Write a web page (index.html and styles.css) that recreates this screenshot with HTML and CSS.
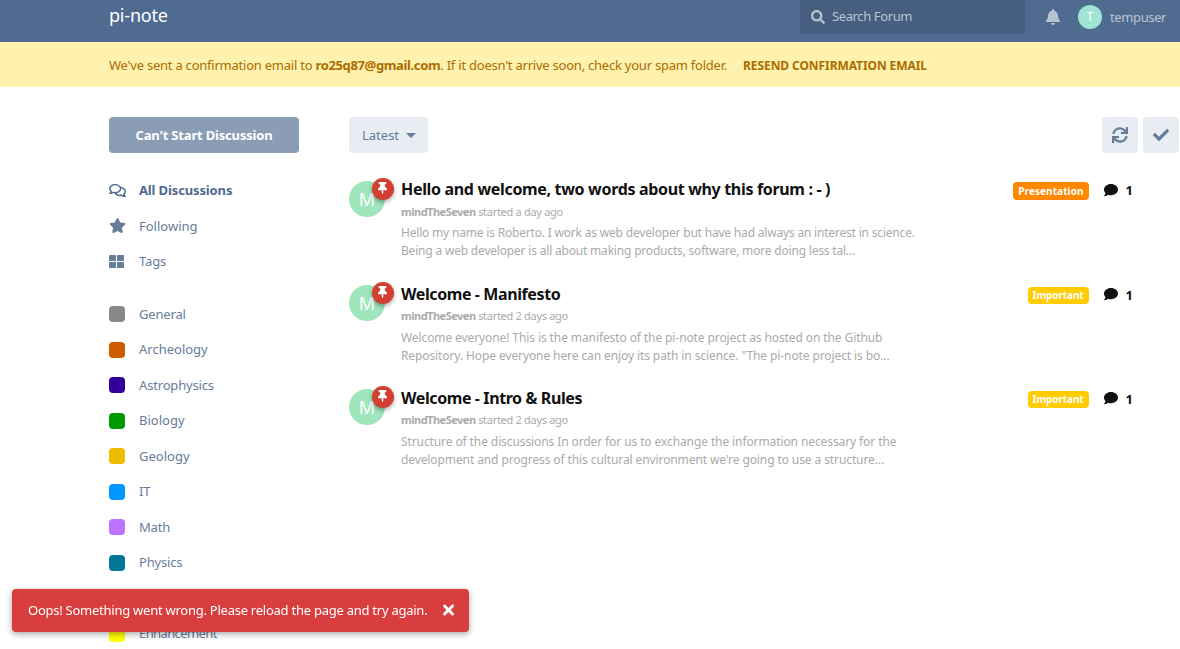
FILE: index.html
```html
<!DOCTYPE html>
<html lang="en">
<head>
<meta charset="UTF-8">
<meta name="viewport" content="width=device-width, initial-scale=1">
<title>pi-note</title>
<link rel="stylesheet" href="styles.css">
</head>
<body>
<!-- icons -->
<svg class="sprite" width="0" height="0">
	<symbol id="search" viewBox="0 0 512 512"><path d="M505 442.7L405.3 343c-4.5-4.5-10.6-7-17-7H372c27.6-35.3 44-79.7 44-128C416 93.1 322.9 0 208 0S0 93.1 0 208s93.1 208 208 208c48.3 0 92.7-16.4 128-44v16.3c0 6.4 2.5 12.5 7 17l99.7 99.7c9.4 9.4 24.6 9.4 33.9 0l28.3-28.3c9.4-9.4 9.4-24.6.1-34zM208 336c-70.7 0-128-57.2-128-128 0-70.7 57.2-128 128-128 70.7 0 128 57.2 128 128 0 70.7-57.2 128-128 128z"/></symbol>
	<symbol id="bell" viewBox="0 0 448 512"><path d="M224 512c35.32 0 63.97-28.65 63.97-64H160.03c0 35.35 28.65 64 63.97 64zm215.39-149.71c-19.32-20.76-55.47-51.99-55.47-154.29 0-77.7-54.48-139.9-127.94-155.16V32c0-17.67-14.32-32-31.98-32s-31.98 14.33-31.98 32v20.84C118.56 68.1 64.08 130.3 64.08 208c0 102.3-36.15 133.53-55.47 154.29-6 6.45-8.66 14.16-8.61 21.71.11 16.4 12.98 32 32.1 32h383.8c19.12 0 32-15.6 32.1-32 .05-7.55-2.61-15.27-8.61-21.71z"/></symbol>
	<symbol id="sync" viewBox="0 0 512 512"><path d="M440.65 12.57l4 82.77A247.16 247.16 0 0 0 255.83 8C134.73 8 33.91 94.92 12.29 209.82A12 12 0 0 0 24.09 224h49.05a12 12 0 0 0 11.67-9.26 175.91 175.91 0 0 1 317-56.94l-101.46-4.86a12 12 0 0 0-12.57 12v47.41a12 12 0 0 0 12 12H500a12 12 0 0 0 12-12V12a12 12 0 0 0-12-12h-47.37a12 12 0 0 0-11.98 12.57zM255.83 432a175.61 175.61 0 0 1-146-77.8l101.8 4.87a12 12 0 0 0 12.57-12v-47.4a12 12 0 0 0-12-12H12a12 12 0 0 0-12 12V500a12 12 0 0 0 12 12h47.35a12 12 0 0 0 12-12.6l-4.15-82.57A247.17 247.17 0 0 0 255.83 504c121.11 0 221.93-86.92 243.55-201.82a12 12 0 0 0-11.8-14.18h-49.05a12 12 0 0 0-11.67 9.26A175.86 175.86 0 0 1 255.83 432z"/></symbol>
	<symbol id="check" viewBox="0 0 512 512"><path d="M173.898 439.404l-166.4-166.4c-9.997-9.997-9.997-26.206 0-36.204l36.203-36.204c9.997-9.998 26.207-9.998 36.204 0L192 312.69 432.095 72.596c9.997-9.997 26.207-9.997 36.204 0l36.203 36.204c9.997 9.997 9.997 26.206 0 36.204l-294.4 294.401c-9.998 9.997-26.207 9.997-36.204-.001z"/></symbol>
	<symbol id="comments" viewBox="0 0 576 512"><path d="M532 386.2c27.5-27.1 44-61.1 44-98.2 0-80-76.5-146.1-176.2-157.9C368.3 72.5 294.3 32 208 32 93.1 32 0 103.6 0 192c0 37 16.5 71 44 98.2-15.3 30.7-37.3 54.5-37.7 54.9-6.3 6.7-8.1 16.5-4.4 25 3.6 8.5 12 14 21.2 14 53.5 0 96.7-20.2 125.2-38.8 9.2 2.1 18.7 3.7 28.4 4.9C208.1 407.6 281.8 448 368 448c20.8 0 40.8-2.4 59.8-6.8C456.3 459.7 499.4 480 553 480c9.2 0 17.5-5.5 21.2-14 3.6-8.5 1.9-18.3-4.4-25-.4-.3-22.5-24.1-37.8-54.8zm-392.8-92.3L122.1 305c-14.1 9.1-28.5 16.3-43.1 21.4 2.7-4.7 5.4-9.7 8-14.8l15.5-31.1L77.7 256C64.2 242.6 48 220.7 48 192c0-60.7 73.3-112 160-112s160 51.3 160 112-73.3 112-160 112c-16.5 0-33-1.9-49-5.6l-19.8-4.5zM498.3 352l-24.7 24.4 15.5 31.1c2.6 5.1 5.3 10.1 8 14.8-14.6-5.1-29-12.3-43.1-21.4l-17.1-11.1-19.9 4.6c-16 3.7-32.5 5.6-49 5.6-54 0-102.2-20.1-131.3-49.7C338 339.5 416 272.9 416 192c0-3.4-.4-6.7-.7-10C479.7 196.5 528 238.8 528 288c0 28.7-16.2 50.6-29.7 64z"/></symbol>
	<symbol id="star" viewBox="0 0 576 512"><path d="M259.3 17.8L194 150.2 47.9 171.5c-26.2 3.8-36.7 36.1-17.7 54.6l105.7 103-25 145.5c-4.5 26.3 23.2 46 46.4 33.7L288 439.6l130.7 68.7c23.2 12.2 50.9-7.4 46.4-33.7l-25-145.5 105.7-103c19-18.5 8.5-50.8-17.7-54.6L382 150.2 316.7 17.8c-11.7-23.6-45.6-23.9-57.4 0z"/></symbol>
	<symbol id="tags" viewBox="0 0 512 512"><path d="M296 32h192c13.255 0 24 10.745 24 24v160c0 13.255-10.745 24-24 24H296c-13.255 0-24-10.745-24-24V56c0-13.255 10.745-24 24-24zm-80 0H24C10.745 32 0 42.745 0 56v160c0 13.255 10.745 24 24 24h192c13.255 0 24-10.745 24-24V56c0-13.255-10.745-24-24-24zM0 296v160c0 13.255 10.745 24 24 24h192c13.255 0 24-10.745 24-24V296c0-13.255-10.745-24-24-24H24c-13.255 0-24 10.745-24 24zm296 184h192c13.255 0 24-10.745 24-24V296c0-13.255-10.745-24-24-24H296c-13.255 0-24 10.745-24 24v160c0 13.255 10.745 24 24 24z"/></symbol>
	<symbol id="pin" viewBox="0 0 384 512"><path d="M298.028 214.267L285.793 96H328c13.255 0 24-10.745 24-24V24c0-13.255-10.745-24-24-24H56C42.745 0 32 10.745 32 24v48c0 13.255 10.745 24 24 24h42.207L85.972 214.267C37.465 236.82 0 277.261 0 328c0 13.255 10.745 24 24 24h136v104.007c0 1.242.289 2.467.845 3.578l24 48c2.941 5.882 11.364 5.893 14.311 0l24-48a8.008 8.008 0 0 0 .845-3.578V352h136c13.255 0 24-10.745 24-24-.001-51.183-37.983-91.42-85.973-113.733z"/></symbol>
	<symbol id="comment" viewBox="0 0 512 512"><path d="M256 32C114.6 32 0 125.1 0 240c0 49.6 21.4 95 57 130.7C44.5 421.1 2.7 466 2.2 466.5c-2.2 2.3-2.8 5.7-1.5 8.7S4.8 480 8 480c66.3 0 116-31.8 140.6-51.4 32.7 12.3 69 19.4 107.4 19.4 141.4 0 256-93.1 256-208S397.4 32 256 32z"/></symbol>
	<symbol id="times" viewBox="0 0 352 512"><path d="M242.72 256l100.07-100.07c12.28-12.28 12.28-32.19 0-44.48l-22.24-22.24c-12.28-12.28-32.19-12.28-44.48 0L176 189.28 75.93 89.21c-12.28-12.28-32.19-12.28-44.48 0L9.21 111.45c-12.28 12.28-12.28 32.19 0 44.48L109.28 256 9.21 356.07c-12.28 12.28-12.28 32.19 0 44.48l22.24 22.24c12.28 12.28 32.2 12.28 44.48 0L176 322.72l100.07 100.07c12.28 12.28 32.2 12.28 44.48 0l22.24-22.24c12.28-12.28 12.28-32.19 0-44.48L242.72 256z"/></symbol>
</svg>

<header class="header">
	<a class="logo">pi-note</a>
	<div class="search"><svg class="icon"><use href="#search"/></svg><span>Search Forum</span></div>
	<svg class="bell"><use href="#bell"/></svg>
	<div class="user"><span class="user-avatar">T</span><span>tempuser</span></div>
</header>

<div class="notice">
	<span class="notice-text">We've sent a confirmation email to <strong>ro25q87@gmail.com</strong>. If it doesn't arrive soon, check your spam folder.</span>
	<a class="resend">RESEND CONFIRMATION EMAIL</a>
</div>

<div class="container">
	<nav class="side">
		<div class="start">Can't Start Discussion</div>
		<ul class="links">
			<li class="active"><svg class="icon wide"><use href="#comments"/></svg><span>All Discussions</span></li>
			<li><svg class="icon wide"><use href="#star"/></svg><span class="spaced">Following</span></li>
			<li><svg class="icon"><use href="#tags"/></svg><span>Tags</span></li>
		</ul>
		<ul class="links tags">
			<li><i class="tag general"></i><span>General</span></li>
			<li><i class="tag archeology"></i><span class="spaced">Archeology</span></li>
			<li><i class="tag astro"></i><span>Astrophysics</span></li>
			<li><i class="tag biology"></i><span class="spaced">Biology</span></li>
			<li><i class="tag geology"></i><span class="spaced">Geology</span></li>
			<li><i class="tag it"></i><span>IT</span></li>
			<li><i class="tag math"></i><span>Math</span></li>
			<li><i class="tag physics"></i><span>Physics</span></li>
			<li></li>
			<li><i class="tag enhancement"></i><span class="tight">Enhancement</span></li>
		</ul>
	</nav>

	<main class="main">
		<div class="toolbar">
			<div class="sort"><span>Latest</span><i class="caret"></i></div>
			<div class="actions">
				<div class="square"><svg class="icon"><use href="#sync"/></svg></div>
				<div class="square"><svg class="icon"><use href="#check"/></svg></div>
			</div>
		</div>

		<article class="item long">
			<div class="avatar">M<span class="badge"><svg><use href="#pin"/></svg></span></div>
			<div class="text">
				<h3>Hello and welcome, two words about why this forum : - )</h3>
				<div class="meta"><b>mindTheSeven</b> started a day ago</div>
				<p>Hello my name is Roberto. I work as web developer but have had always an interest in science.<br>Being a web developer is all about making products, software, more doing less tal...</p>
			</div>
			<span class="label presentation">Presentation</span>
			<div class="count"><svg><use href="#comment"/></svg>1</div>
		</article>

		<article class="item">
			<div class="avatar">M<span class="badge"><svg><use href="#pin"/></svg></span></div>
			<div class="text">
				<h3>Welcome - Manifesto</h3>
				<div class="meta"><b>mindTheSeven</b> started 2 days ago</div>
				<p>Welcome everyone! This is the manifesto of the pi-note project as hosted on the Github<br>Repository. Hope everyone here can enjoy its path in science. "The pi-note project is bo...</p>
			</div>
			<span class="label important">Important</span>
			<div class="count"><svg><use href="#comment"/></svg>1</div>
		</article>

		<article class="item">
			<div class="avatar">M<span class="badge"><svg><use href="#pin"/></svg></span></div>
			<div class="text">
				<h3>Welcome - Intro &amp; Rules</h3>
				<div class="meta"><b>mindTheSeven</b> started 2 days ago</div>
				<p>Structure of the discussions In order for us to exchange the information necessary for the<br>development and progress of this cultural environment we're going to use a structure...</p>
			</div>
			<span class="label important">Important</span>
			<div class="count"><svg><use href="#comment"/></svg>1</div>
		</article>
	</main>
</div>

<div class="alert"><span>Oops! Something went wrong. Please reload the page and try again.</span><svg><use href="#times"/></svg></div>
</body>
</html>
```
FILE: styles.css
```css
* {
	box-sizing: border-box;
}
body {
	margin: 0;
	height: 649px;
	overflow: hidden;
	background: #fff;
	color: #667d99;
	font-family: "Noto Sans", "Open Sans", sans-serif;
	font-size: 13px;
	line-height: 18px;
	white-space: nowrap;
}
svg {
	display: block;
	fill: currentColor;
	flex: none;
}
.sprite {
	position: absolute;
}
.icon {
	width: 15px;
	height: 15px;
}

/* header */
.header {
	display: flex;
	height: 42px;
	padding-left: 109px;
	background: #4f6b90;
	color: #b9c4d3;
	letter-spacing: -0.38px;
}
.logo {
	width: 691px;
	padding-top: 3px;
	color: #fff;
	font-size: 18px;
	line-height: 24px;
	letter-spacing: -0.2px;
}
.search {
	display: flex;
	align-items: center;
	gap: 7px;
	width: 225px;
	height: 34px;
	padding: 0 0 2px 11px;
	border-radius: 0 0 4px 4px;
	background: #465f80;
}
.search .icon {
	width: 14px;
	height: 14px;
	margin-top: 1px;
}
.bell {
	width: 14px;
	height: 16px;
	margin: 9px 18px 0 21px;
}
.user {
	display: flex;
	align-items: center;
	gap: 8px;
	height: 34px;
}
.user-avatar {
	width: 24px;
	height: 24px;
	border-radius: 50%;
	background: #a0e5d3;
	color: #fff;
	font-size: 12px;
	line-height: 24px;
	text-align: center;
}

/* email notice */
.notice {
	display: flex;
	gap: 16px;
	height: 45px;
	padding: 14px 0 0 109px;
	background: #fff2ae;
	color: #ad6c00;
	letter-spacing: -0.23px;
}
.notice strong {
	letter-spacing: -0.36px;
}
.resend {
	padding-top: 1px;
	font-size: 12px;
	font-weight: bold;
	letter-spacing: -0.08px;
}

.container {
	display: flex;
	gap: 50px;
	padding: 30px 1px 0 109px;
}

/* sidebar */
.side {
	width: 190px;
}
.start {
	height: 36px;
	border-radius: 4px;
	background: #8b9cb5;
	color: #fff;
	font-weight: bold;
	line-height: 36px;
	letter-spacing: -0.18px;
	text-align: center;
}
.links {
	margin: 19.5px 0 0;
	padding: 0;
	list-style: none;
	letter-spacing: -0.17px;
}
.links li {
	display: flex;
	align-items: center;
	height: 35.5px;
}
.links span {
	margin-left: 14px;
}
.links .spaced {
	letter-spacing: 0;
}
.links .tight {
	letter-spacing: -0.6px;
}
.links .icon {
	width: 15px;
	margin-right: 1px;
}
.links .icon.wide {
	width: 17px;
	margin-right: 0;
}
.links .wide + span {
	margin-left: 13px;
}
.links .active {
	color: #4d698e;
	font-weight: bold;
	letter-spacing: -0.13px;
}
.links.tags {
	margin-top: 17px;
}
.tag {
	width: 16px;
	height: 16px;
	margin-top: 0.8px;
	border-radius: 4px;
}
.general { background: #888; }
.archeology { background: #cf5c00; }
.astro { background: #330099; }
.biology { background: #009900; }
.geology { background: #efbb00; }
.it { background: #0099ff; }
.math { background: #bf72ff; }
.physics { background: #007799; }
.enhancement { background: #ffff00; }

/* discussion list */
.main {
	flex: 1;
}
.toolbar {
	display: flex;
	justify-content: space-between;
	margin-bottom: 21px;
}
.sort, .square {
	display: flex;
	align-items: center;
	height: 36px;
	border-radius: 4px;
	background: #e7edf3;
}
.sort {
	justify-content: space-between;
	width: 79px;
	padding: 0 13px;
}
.caret {
	margin-right: -1px;
	border: 5px solid transparent;
	border-top-color: #667d99;
	border-bottom: 0;
}
.actions {
	display: flex;
	gap: 5px;
}
.square {
	justify-content: center;
	width: 36px;
}
.square .icon {
	width: 16px;
	height: 16px;
}
.item {
	display: flex;
	height: 104px;
	padding-right: 46px;
}
.item.long {
	height: 105px;
}
.avatar {
	position: relative;
	width: 36px;
	height: 36px;
	margin: 7px 16px 0 0;
	border-radius: 50%;
	background: #a0e5bb;
	color: #fff;
	font-size: 18px;
	line-height: 36px;
	text-align: center;
}
.item + .item .avatar {
	margin-top: 6px;
}
.badge {
	position: absolute;
	top: -3px;
	left: 23px;
	display: flex;
	justify-content: center;
	width: 22px;
	height: 22px;
	padding: 4px 1px 0 0;
	border-radius: 50%;
	background: #d13e32;
	box-shadow: 0 2px 4px rgba(0, 0, 0, 0.35);
}
.badge svg {
	width: 9px;
	height: 12px;
}
.text {
	flex: 1;
	color: #aaa;
}
.text h3 {
	margin: 4px 0 4px;
	color: #111;
	font-size: 16px;
	line-height: 22px;
	letter-spacing: -0.4px;
}
.long h3 {
	letter-spacing: -0.33px;
}
.meta {
	font-size: 11px;
	line-height: 16px;
	letter-spacing: -0.3px;
}
.meta b {
	letter-spacing: -0.5px;
}
.item + .item .meta {
	margin: -1px 0 5px;
}
.text p {
	margin: 4px 0 0;
	font-size: 12px;
	line-height: 18px;
	letter-spacing: -0.1px;
}
.long p {
	letter-spacing: -0.19px;
}
.label {
	height: 18px;
	margin: 8px 15px 0 0;
	padding: 0 5px;
	border-radius: 4px;
	color: #fff;
	font-size: 10px;
	font-weight: bold;
	line-height: 18px;
	letter-spacing: 0.08px;
}
.presentation { background: #ff8800; }
.important {
	height: 17px;
	background: #ffcc00;
	line-height: 17px;
	letter-spacing: -0.1px;
}
.count {
	display: flex;
	gap: 8px;
	height: 18px;
	margin-top: 7px;
	color: #111;
	font-weight: bold;
}
.count svg {
	width: 14px;
	height: 14px;
	margin-top: 2px;
}
.item + .item .count svg {
	margin-top: 1px;
}

/* error message */
.alert {
	position: fixed;
	left: 12px;
	bottom: 17px;
	display: flex;
	align-items: center;
	justify-content: space-between;
	width: 457px;
	height: 43px;
	padding: 0 15px 1px 16px;
	border-radius: 4px;
	background: #d83e3e;
	box-shadow: 0 2px 6px rgba(0, 0, 0, 0.35);
	color: #fff;
	letter-spacing: -0.25px;
}
.alert svg {
	width: 11px;
	height: 16px;
}
```
